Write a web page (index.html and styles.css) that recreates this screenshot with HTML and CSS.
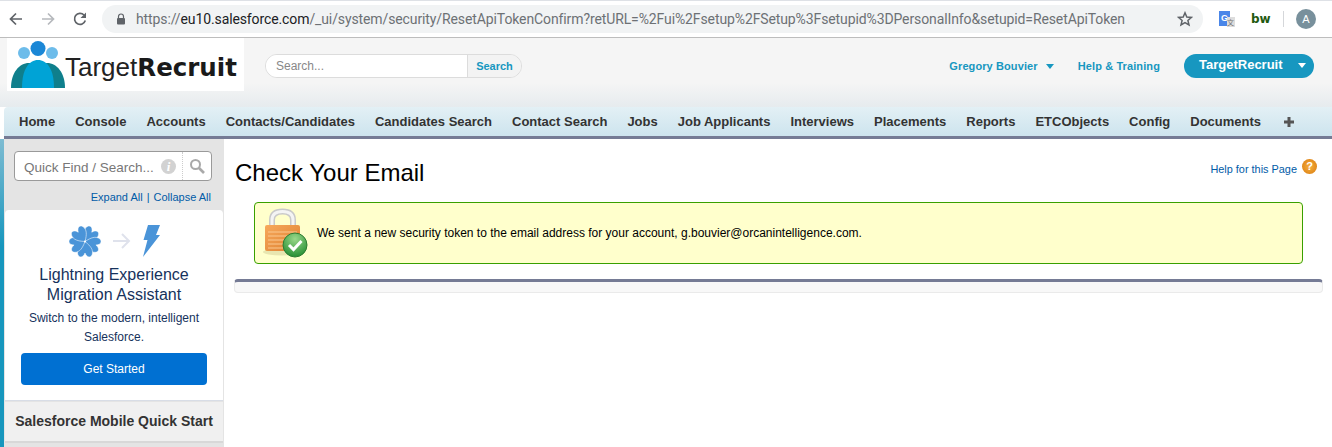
FILE: index.html
```html
<!DOCTYPE html>
<html lang="en">
<head>
    <meta charset="UTF-8">
    <title>Check Your Email</title>
    <link rel="stylesheet" href="styles.css">
</head>
<body>

    <!-- Browser toolbar -->
    <div class="toolbar">
        <svg class="tool-icon" viewBox="0 0 16 16"><path d="M14 8H3M8 2.500 2.500 8 8 13.500" fill="none" stroke="#5f6368" stroke-width="1.700"/></svg>
        <svg class="tool-icon" viewBox="0 0 16 16"><path d="M2 8h11M8 2.500 13.500 8 8 13.500" fill="none" stroke="#b6b9bd" stroke-width="1.700"/></svg>
        <svg class="tool-icon" viewBox="0 0 16 16"><path d="M13.300 9.500A5.500 5.500 0 1 1 12 4" fill="none" stroke="#5f6368" stroke-width="1.700"/><path d="M14 1.500V7H8.500z" fill="#5f6368"/></svg>
        <div class="omnibox">
            <svg class="lock" viewBox="0 0 10 12"><path d="M2.500 5V3.500a2.500 2.500 0 0 1 5 0V5" fill="none" stroke="#5f6368" stroke-width="1.200"/><rect x="1" y="5" width="8" height="6.500" rx="1" fill="#5f6368"/></svg>
            <div class="url">https://<span class="url-host">eu10.salesforce.com</span>/_ui/system/security/ResetApiTokenConfirm?retURL=%2Fui%2Fsetup%2FSetup%3Fsetupid%3DPersonalInfo&amp;setupid=ResetApiToken</div>
            <svg class="star" viewBox="0 0 16 16"><path d="M8 1.800 9.800 6l4.600.4-3.500 3 1.100 4.500L8 11.500l-4 2.400 1.100-4.500-3.500-3L6.200 6z" fill="none" stroke="#5f6368" stroke-width="1.500"/></svg>
        </div>
        <div class="ext-translate"><span class="ext-g">G</span><span class="ext-x">文</span></div>
        <div class="ext-bw">bw</div>
        <div class="tool-divider"></div>
        <div class="avatar">A</div>
    </div>

    <!-- Salesforce header -->
    <div class="header">
        <div class="logo">
            <svg class="logo-mark" viewBox="0 0 54 48">
                <circle cx="13" cy="12" r="6" fill="#6dbcea"/>
                <circle cx="41" cy="12" r="6" fill="#6dbcea"/>
                <path d="M0 47C0 32 8 22 18 22H36C46 22 54 32 54 47z" fill="#0f7f8c"/>
                <circle cx="27" cy="7.500" r="7.500" fill="#1b87d6"/>
                <path d="M11 47C11 28 18 19 27 19S43 28 43 47z" fill="#00a3d6"/>
            </svg>
            <div class="logo-text">Target<b>Recruit</b></div>
        </div>
        <div class="search">
            <div class="search-input">Search...</div>
            <div class="search-btn">Search</div>
        </div>
        <div class="header-links">
            <a class="header-link">Gregory Bouvier <i class="caret"></i></a>
            <a class="header-link">Help &amp; Training</a>
            <div class="app-menu"><span>TargetRecruit</span><i class="caret caret-white"></i></div>
        </div>
    </div>

    <!-- Tabs -->
    <div class="tabs">
        <a>Home</a>
        <a>Console</a>
        <a>Accounts</a>
        <a>Contacts/Candidates</a>
        <a>Candidates Search</a>
        <a>Contact Search</a>
        <a>Jobs</a>
        <a>Job Applicants</a>
        <a>Interviews</a>
        <a>Placements</a>
        <a>Reports</a>
        <a>ETCObjects</a>
        <a>Config</a>
        <a>Documents</a>
        <svg class="plus" viewBox="0 0 10 10"><path d="M5 0v10M0 5h10" stroke="#555" stroke-width="3"/></svg>
    </div>

    <div class="page">
        <div class="sidebar">
            <div class="quick-find">
                <div class="quick-text">Quick Find / Search...</div>
                <div class="info-dot">i</div>
                <div class="quick-btn">
                    <svg viewBox="0 0 16 16" width="16" height="16"><circle cx="6.500" cy="6.500" r="4.500" fill="none" stroke="#a9a9a9" stroke-width="2"/><path d="M10 10l5 5" stroke="#a9a9a9" stroke-width="2.600"/></svg>
                </div>
            </div>
            <div class="expand"><a>Expand All</a><span class="sep">|</span><a>Collapse All</a></div>

            <div class="card">
                <div class="card-icons">
                    <svg width="32" height="32" viewBox="0 0 32 32">
                        <defs>
                            <path id="petal" d="M16 16.500C13 14 8 10 8.500 5 9 0 14-.500 16 5 18-.500 23 0 23.500 5 24 10 19 14 16 16.500z" fill="#4a94d8" stroke="#fff" stroke-width=".5"/>
                        </defs>
                        <use href="#petal" transform="rotate(36 16 16.500)"/>
                        <use href="#petal" transform="rotate(108 16 16.500)"/>
                        <use href="#petal" transform="rotate(180 16 16.500)"/>
                        <use href="#petal" transform="rotate(252 16 16.500)"/>
                        <use href="#petal" transform="rotate(324 16 16.500)"/>
                        <circle cx="16" cy="16.500" r="1" fill="#fff"/>
                    </svg>
                    <svg class="card-arrow" width="18" height="16" viewBox="0 0 18 16"><path d="M0 8h16M9 1l7 7-7 7" fill="none" stroke="#dfe2ec" stroke-width="2"/></svg>
                    <svg width="17" height="32" viewBox="0 0 17 32"><path d="M5 0h12l-4 10h4L0 32l4.500-17H.500z" fill="#4a94d8"/></svg>
                </div>
                <div class="card-title">Lightning Experience<br>Migration Assistant</div>
                <div class="card-text">Switch to the modern, intelligent<br>Salesforce.</div>
                <div class="card-btn">Get Started</div>
            </div>
            <div class="quick-start">Salesforce Mobile Quick Start</div>
        </div>

        <div class="main">
            <div class="title-row">
                <h1>Check Your Email</h1>
                <div class="help">
                    <a>Help for this Page</a>
                    <div class="help-icon">?</div>
                </div>
            </div>
            <div class="message">
                <svg class="message-icon" width="46" height="50" viewBox="0 0 46 50">
                    <defs>
                        <linearGradient id="lockBody" x1="0" y1="0" x2="1" y2="1">
                            <stop offset="0" stop-color="#f7a95c"/>
                            <stop offset="1" stop-color="#dd8030"/>
                        </linearGradient>
                        <radialGradient id="okBall" cx="0.500" cy="0.250" r="0.800">
                            <stop offset="0" stop-color="#9ad88a"/>
                            <stop offset="1" stop-color="#1f8a2e"/>
                        </radialGradient>
                    </defs>
                    <ellipse cx="20" cy="44" rx="19" ry="3.500" fill="#e8e6b0"/>
                    <path d="M10 20V12C10 5 15 3.500 20.500 3.500S31 5 31 12v8" fill="none" stroke="#c9c9c9" stroke-width="6"/>
                    <path d="M10 20V12C10 5 15 3.500 20.500 3.500S31 5 31 12v8" fill="none" stroke="#f4f4f4" stroke-width="3"/>
                    <rect x="3" y="17" width="35" height="26" rx="2" fill="url(#lockBody)"/>
                    <path d="M6 24h29M6 28h29M6 32h29M6 36h29M6 40h29" stroke="#fbc88f" stroke-width="1"/>
                    <circle cx="33" cy="37" r="12" fill="url(#okBall)" stroke="#2e7d32"/>
                    <path d="M27 37l4.500 4.500L39.500 33" fill="none" stroke="#fff" stroke-width="3"/>
                </svg>
                <div class="message-text">We sent a new security token to the email address for your account, g.bouvier@orcanintelligence.com.</div>
            </div>
            <div class="block"></div>
        </div>
    </div>

</body>
</html>
```

FILE: styles.css
```css
/* General */
body {
    font-family: 'Liberation Sans', Arial, sans-serif;
    margin: 0;
    padding: 0;
    height: 447px;
    overflow: hidden;
    background-color: #fff;
    color: #000;
}

a {
    text-decoration: none;
}

/* Browser toolbar */
.toolbar {
    display: flex;
    align-items: center;
    height: 36px;
    padding-left: 8px;
    background-color: #fff;
    border-top: 1px solid #dee1e6;
    border-bottom: 1px solid #bdbdbd;
}

.tool-icon {
    width: 16px;
    height: 16px;
    margin-right: 16px;
    flex: none;
}

.omnibox {
    display: flex;
    align-items: center;
    width: 1101px;
    height: 28px;
    margin-left: -2px;
    padding: 0 10px 0 14px;
    box-sizing: border-box;
    border-radius: 14px;
    background-color: #f1f3f4;
}

.lock {
    width: 10px;
    height: 12px;
    flex: none;
    margin-right: 10px;
}

.url {
    flex: 1;
    font-family: 'Roboto', 'Liberation Sans', sans-serif;
    font-size: 14px;
    letter-spacing: -0.11px;
    color: #6d7175;
    white-space: nowrap;
    overflow: hidden;
}

.url-host {
    color: #202124;
}

.star {
    width: 16px;
    height: 16px;
    flex: none;
}

.ext-translate {
    display: flex;
    width: 16px;
    height: 16px;
    margin-left: 16px;
    flex: none;
}

.ext-g {
    width: 11px;
    height: 15px;
    background-color: #4a86e8;
    color: #fff;
    font-size: 9px;
    font-weight: bold;
    line-height: 15px;
    text-align: center;
}

.ext-x {
    width: 8px;
    height: 10px;
    margin: 6px 0 0 -3px;
    background-color: #ddd;
    color: #777;
    font-family: 'Noto Sans CJK SC', sans-serif;
    font-size: 7px;
    line-height: 10px;
}

.ext-bw {
    margin-left: 16px;
    width: 18px;
    font-family: 'DejaVu Sans', sans-serif;
    color: #1f5a10;
    font-size: 12px;
    font-weight: bold;
    line-height: 13px;
}

.tool-divider {
    width: 1px;
    height: 16px;
    margin: 0 12px 0 14px;
    background-color: #d5d7da;
}

.avatar {
    width: 20px;
    height: 20px;
    border-radius: 50%;
    background-color: #78909c;
    color: #fff;
    font-size: 11px;
    line-height: 20px;
    text-align: center;
}

/* Salesforce header */
.header {
    display: flex;
    align-items: flex-start;
    height: 69px;
    padding-left: 7px;
    background: linear-gradient(#f5f5f5 65%, #e6ebee 100%);
}

.logo {
    display: flex;
    align-items: flex-end;
    width: 237px;
    height: 53px;
    flex: none;
    padding-left: 4px;
    box-sizing: border-box;
    background-color: #fff;
}

.logo-mark {
    width: 54px;
    height: 48px;
    flex: none;
    margin-bottom: 2px;
}

.logo-text {
    margin-bottom: 9px;
    font-size: 26px;
    line-height: 28px;
    color: #222;
    white-space: nowrap;
}

.logo-text b {
    font-family: 'DejaVu Sans', sans-serif;
    font-size: 24.500px;
    color: #1a1a1a;
}

.search {
    display: flex;
    width: 257px;
    height: 24px;
    margin: 16px 0 0 21px;
    border: 1px solid #dcdcdc;
    border-radius: 12px;
    box-sizing: border-box;
    overflow: hidden;
    font-size: 12px;
    line-height: 22px;
}

.search-input {
    width: 201px;
    padding-left: 10px;
    box-sizing: border-box;
    background-color: #fff;
    color: #888;
}

.search-btn {
    flex: 1;
    border-left: 1px solid #dcdcdc;
    background-color: #f3f3f3;
    color: #1797c0;
    font-size: 11px;
    font-weight: bold;
    text-align: center;
}

.header-links {
    display: flex;
    align-items: center;
    margin: 16px 18px 0 auto;
    height: 24px;
}

.header-link {
    color: #1797c0;
    font-size: 11px;
    font-weight: bold;
    letter-spacing: 0.1px;
    margin-right: 24px;
}

.caret {
    display: inline-block;
    width: 0;
    height: 0;
    margin-left: 5px;
    vertical-align: 1px;
    border-left: 4px solid transparent;
    border-right: 4px solid transparent;
    border-top: 5px solid #1797c0;
}

.caret-white {
    border-top-color: #fff;
    margin-left: 15px;
}

.app-menu {
    width: 130px;
    height: 24px;
    padding-left: 15px;
    box-sizing: border-box;
    border-radius: 12px;
    background-color: #1797c0;
    color: #fff;
    font-size: 13px;
    font-weight: bold;
    line-height: 22px;
}

/* Tabs */
.tabs {
    display: flex;
    align-items: center;
    gap: 20px;
    height: 29px;
    margin-left: 4px;
    padding-left: 15px;
    border-top-left-radius: 4px;
    border-bottom: 3px solid #757b95;
    background: linear-gradient(#e3f0f5, #cde4ee);
    font-size: 13px;
    font-weight: bold;
    color: #333;
    white-space: nowrap;
}

.plus {
    width: 10px;
    height: 10px;
    margin-left: 3px;
}

/* Page */
.page {
    display: flex;
    align-items: flex-start;
    background: linear-gradient(#7fbcd2, #1796bd 35%) 0 0 / 4px 100% no-repeat;
}

.sidebar {
    width: 220px;
    height: 296px;
    flex: none;
    margin-left: 4px;
    padding-top: 12px;
    background-color: #e4e4e4;
}

.quick-find {
    display: flex;
    align-items: center;
    width: 198px;
    height: 30px;
    margin-left: 10px;
    box-sizing: border-box;
    border: 1px solid #9a9a9a;
    border-radius: 4px;
    background-color: #fff;
}

.quick-text {
    flex: 1;
    padding: 2px 0 0 9px;
    font-size: 13.500px;
    color: #777;
    white-space: nowrap;
}

.info-dot {
    width: 15px;
    height: 15px;
    margin-right: 6px;
    border-radius: 50%;
    background-color: #d2d2d2;
    color: #fff;
    font-family: 'Liberation Serif', serif;
    font-size: 13px;
    font-style: italic;
    font-weight: bold;
    line-height: 15px;
    text-align: center;
}

.quick-btn {
    display: flex;
    align-items: center;
    justify-content: center;
    width: 28px;
    height: 28px;
    border-left: 1px dotted #ccc;
}

.expand {
    margin: 9px 13px 6px 0;
    font-size: 11px;
    line-height: 14px;
    color: #015ba7;
    text-align: right;
}

.sep {
    margin: 0 4px;
}

.card {
    width: 218px;
    height: 191px;
    margin-left: 1px;
    padding-top: 15px;
    box-sizing: border-box;
    border-radius: 4px 4px 0 0;
    background-color: #fff;
    border-bottom: 1px solid #d8dde6;
    text-align: center;
    color: #16325c;
}

.card-icons {
    display: flex;
    align-items: center;
    justify-content: center;
    gap: 12px;
    height: 32px;
}

.card-title {
    margin-top: 8px;
    font-size: 16px;
    line-height: 20px;
}

.card-text {
    margin-top: 4px;
    font-size: 12px;
    line-height: 18.500px;
}

.card-btn {
    width: 186px;
    height: 32px;
    margin: 7px 0 0 16px;
    border-radius: 4px;
    background-color: #0070d2;
    color: #fff;
    font-size: 12px;
    line-height: 32px;
}

.quick-start {
    width: 218px;
    height: 41px;
    margin: 1px 0 0 1px;
    box-sizing: border-box;
    border-bottom: 2px solid #d8d8d8;
    background-color: #f0f0f0;
    color: #333;
    font-size: 14px;
    font-weight: bold;
    line-height: 38px;
    text-align: center;
}

/* Main content */
.main {
    flex: 1;
    padding: 0 9px 0 10px;
}

.title-row {
    display: flex;
    justify-content: space-between;
    height: 63px;
}

h1 {
    margin: 19px 0 0 1px;
    font-size: 24px;
    font-weight: normal;
    line-height: 30px;
    color: #000;
}

.help {
    display: flex;
    align-items: flex-start;
    margin: 20px 6px 0 0;
    font-size: 10.900px;
    color: #015ba7;
}

.help a {
    margin-top: 4px;
}

.help-icon {
    width: 15px;
    height: 15px;
    margin-left: 5px;
    border-radius: 50%;
    background: radial-gradient(#f5b041, #d97a0c);
    color: #fff;
    font-size: 11px;
    font-weight: bold;
    line-height: 15px;
    text-align: center;
}

.message {
    display: flex;
    align-items: center;
    height: 62px;
    margin: 0 20px;
    box-sizing: border-box;
    border: 1px solid #39a000;
    border-radius: 4px;
    background-color: #ffffcc;
}

.message-icon {
    margin-left: 7px;
    flex: none;
}

.message-text {
    margin-left: 9px;
    font-size: 12px;
    color: #000;
}

.block {
    height: 14px;
    margin-top: 15px;
    box-sizing: border-box;
    border: 1px solid #eaeaea;
    border-top: 3px solid #757b95;
    border-radius: 4px;
    background-color: #f8f8f8;
}
```
